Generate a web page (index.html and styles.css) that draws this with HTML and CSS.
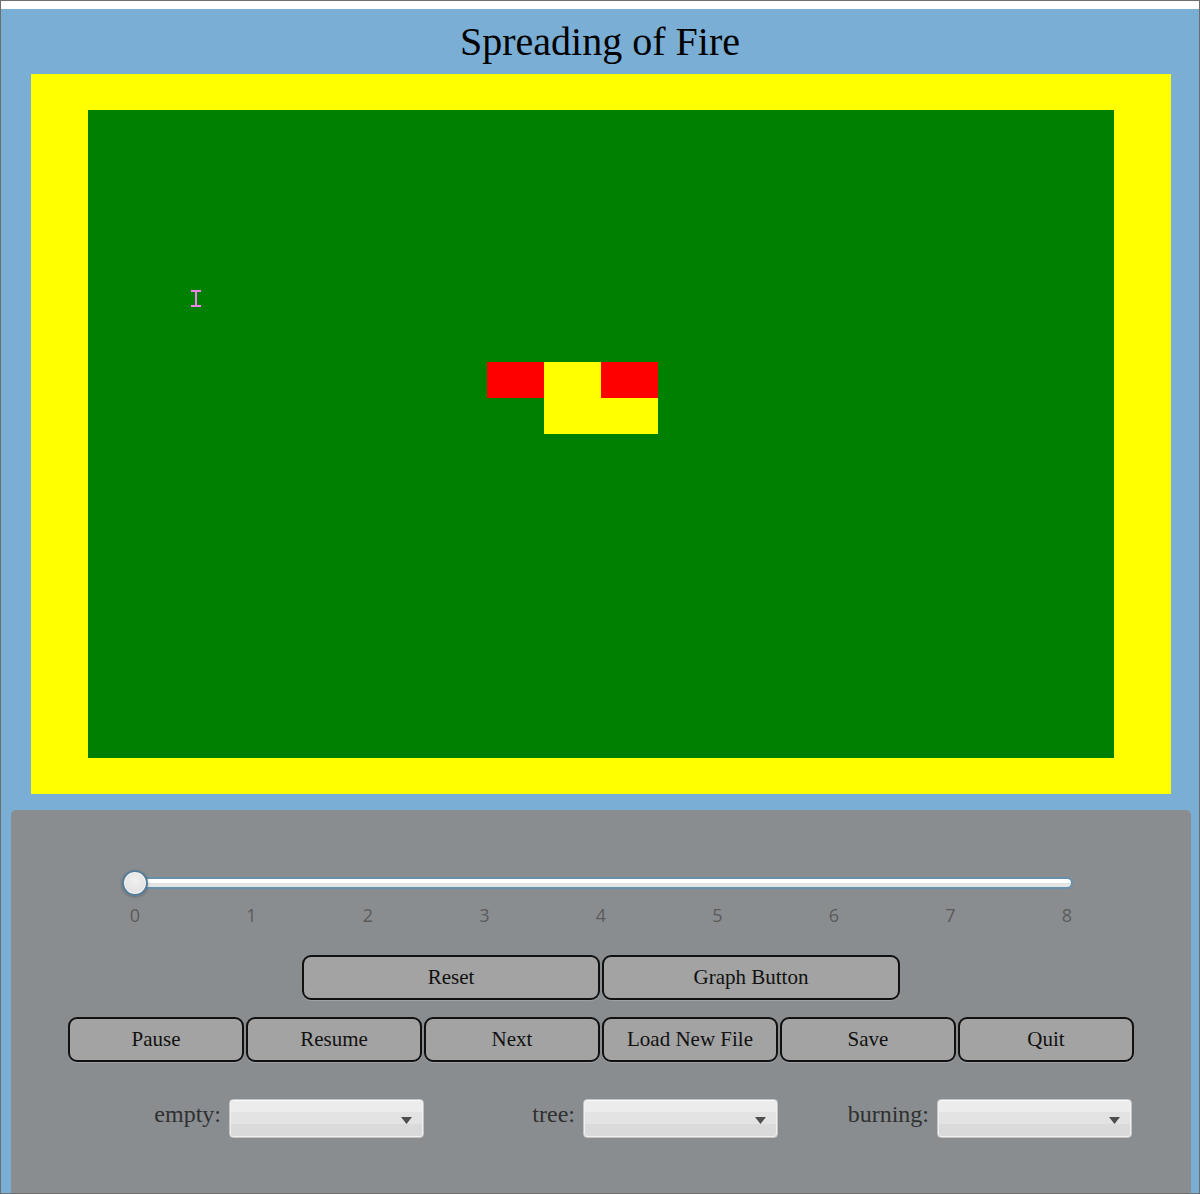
FILE: index.html
```html
<!DOCTYPE html>
<html>
<head>
<meta charset="utf-8">
<title>Spreading of Fire</title>
<link rel="stylesheet" href="styles.css">
</head>
<body>
<div class="window">
  <div class="app">
    <h1 class="title">Spreading of Fire</h1>
    <div class="field">
      <div class="board">
        <div class="cell burning c8 r8"></div>
        <div class="cell empty c9 r8"></div>
        <div class="cell burning c10 r8"></div>
        <div class="cell empty c9 r9"></div>
        <div class="cell empty c10 r9"></div>
        <svg class="cursor" width="10" height="17" viewBox="0 0 10 17">
          <path d="M0 0H10V2H6V15H10V17H0V15H4V2H0Z" fill="#ee82ee"/>
        </svg>
      </div>
    </div>
    <div class="panel">
      <div class="slider">
        <div class="track"></div>
        <div class="thumb"></div>
      </div>
      <div class="ticks">
        <span>0</span><span>1</span><span>2</span><span>3</span><span>4</span><span>5</span><span>6</span><span>7</span><span>8</span>
      </div>
      <div class="btn-row row-top">
        <button class="btn wide">Reset</button>
        <button class="btn wide">Graph Button</button>
      </div>
      <div class="btn-row row-main">
        <button class="btn">Pause</button>
        <button class="btn">Resume</button>
        <button class="btn">Next</button>
        <button class="btn">Load New File</button>
        <button class="btn">Save</button>
        <button class="btn">Quit</button>
      </div>
      <div class="choices">
        <div class="choice">
          <span class="choice-label">empty:</span>
          <div class="combo"><svg class="arrow" width="11" height="7" viewBox="0 0 11 7"><path d="M0 0H11L5.5 7Z" fill="#4e4e4e"/></svg></div>
        </div>
        <div class="choice">
          <span class="choice-label">tree:</span>
          <div class="combo"><svg class="arrow" width="11" height="7" viewBox="0 0 11 7"><path d="M0 0H11L5.5 7Z" fill="#4e4e4e"/></svg></div>
        </div>
        <div class="choice">
          <span class="choice-label">burning:</span>
          <div class="combo"><svg class="arrow" width="11" height="7" viewBox="0 0 11 7"><path d="M0 0H11L5.5 7Z" fill="#4e4e4e"/></svg></div>
        </div>
      </div>
    </div>
  </div>
</div>
</body>
</html>
```

FILE: styles.css
```css
html, body {
  margin: 0;
  padding: 0;
  background: #ffffff;
}

.window {
  width: 1200px;
  height: 1194px;
  box-sizing: border-box;
  border: 1px solid #6e6e6e;
  background: #ffffff;
  padding-top: 8px;
  overflow: hidden;
}

.app {
  height: 1184px;
  background: #7aaed4;
  display: flex;
  flex-direction: column;
}

.title {
  margin: 0;
  height: 65px;
  line-height: 65px;
  font-family: "Liberation Serif", "Times New Roman", serif;
  font-weight: normal;
  font-size: 40px;
  color: #000;
  text-align: center;
}

.field {
  margin-left: 30px;
  width: 1140px;
  height: 720px;
  box-sizing: border-box;
  padding: 36px 57px;
  background: #ffff00;
  flex: none;
}

.board {
  position: relative;
  width: 1026px;
  height: 648px;
  background: #008000;
  display: grid;
  grid-template-columns: repeat(18, 57px);
  grid-template-rows: repeat(18, 36px);
}

.cell.burning { background: #ff0000; }
.cell.empty { background: #ffff00; }
.c8 { grid-column: 8; }
.c9 { grid-column: 9; }
.c10 { grid-column: 10; }
.r8 { grid-row: 8; }
.r9 { grid-row: 9; }

.cursor {
  position: absolute;
  left: 103px;
  top: 180px;
}

.panel {
  margin-top: 16px;
  margin-left: 10px;
  width: 1180px;
  flex: 1;
  box-sizing: border-box;
  background: #8a8d90;
  border-radius: 5px 5px 0 0;
  padding-top: 60px;
}

.slider {
  position: relative;
  margin-left: 111px;
  width: 951px;
  height: 26px;
  box-sizing: border-box;
  padding-top: 7px;
}

.track {
  height: 12px;
  box-sizing: border-box;
  border: 2px solid #6690ae;
  border-radius: 6px;
  background: linear-gradient(#ffffff 0, #ffffff 50%, #e4e4e4 50%, #e4e4e4 100%);
}

.thumb {
  position: absolute;
  left: 0;
  top: 0;
  width: 26px;
  height: 26px;
  box-sizing: border-box;
  border-radius: 50%;
  border: 2px solid #557d9a;
  background: radial-gradient(circle at 50% 40%, #f0f0f0 0, #e2e2e2 70%, #d6d6d6 100%);
  box-shadow: 0 1px 3px rgba(0, 0, 0, 0.25), inset 0 0 0 1px #f4f4f4;
}

.ticks {
  margin-top: 7px;
  margin-left: 65.75px;
  display: flex;
  height: 24px;
  line-height: 24px;
  font-family: "Open Sans", "DejaVu Sans", sans-serif;
  font-size: 18px;
  color: #5b5b5b;
}

.ticks span {
  flex: 0 0 116.5px;
  text-align: center;
}

.btn-row {
  display: flex;
  justify-content: center;
  gap: 2px;
}

.row-top { margin-top: 28px; }
.row-main { margin-top: 17px; }

.btn {
  width: 176px;
  height: 45px;
  box-sizing: border-box;
  margin: 0;
  padding: 0;
  border: 2px solid #111111;
  border-radius: 9px;
  background: #a3a3a3;
  box-shadow: 0 1px 0 rgba(255, 255, 255, 0.18);
  font-family: "Liberation Serif", "Times New Roman", serif;
  font-size: 21px;
  color: #111111;
}

.btn.wide { width: 298px; }

.choices {
  margin: 37px auto 0;
  width: 1062px;
  display: grid;
  grid-template-columns: repeat(3, 354px);
}

.choice {
  display: flex;
  justify-content: flex-end;
  align-items: center;
  gap: 8px;
}

.choice-label {
  font-family: "Liberation Serif", "Times New Roman", serif;
  font-size: 24px;
  color: #303030;
  position: relative;
  top: -4px;
}

.combo {
  width: 195px;
  height: 39px;
  box-sizing: border-box;
  border: 1px solid #c4c4c4;
  border-radius: 4px;
  background: linear-gradient(#ececec 0, #ececec 33%, #e3e3e3 33%, #e3e3e3 66%, #dadada 66%, #dadada 100%);
  box-shadow: inset 0 1px 0 #fafafa, inset 0 0 0 1px #f0f0f0;
  display: flex;
  align-items: center;
  justify-content: flex-end;
  padding-right: 11px;
}

.arrow {
  display: block;
  margin-top: 3px;
}
```
